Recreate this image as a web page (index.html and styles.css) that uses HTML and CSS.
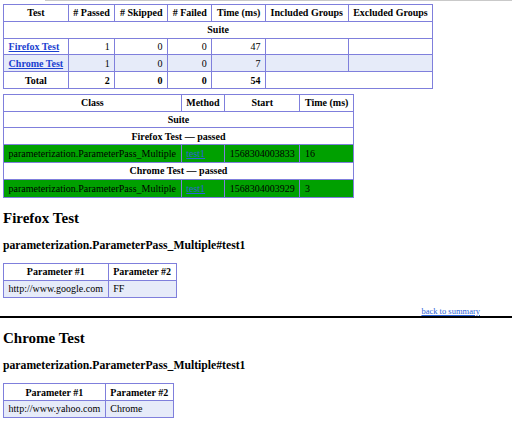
FILE: index.html
```html
<!DOCTYPE html>
<html>
<head>
<meta charset="utf-8">
<link rel="stylesheet" href="styles.css">
</head>
<body>
<div class="topline"></div>
<div class="report">
<table class="summary">
  <tr><th>Test</th><th># Passed</th><th># Skipped</th><th># Failed</th><th>Time (ms)</th><th>Included Groups</th><th>Excluded Groups</th></tr>
  <tr><th colspan="7">Suite</th></tr>
  <tr><td><a href="#t0">Firefox Test</a></td><td class="num">1</td><td class="num">0</td><td class="num">0</td><td class="num">47</td><td></td><td></td></tr>
  <tr class="stripe"><td><a href="#t1">Chrome Test</a></td><td class="num">1</td><td class="num">0</td><td class="num">0</td><td class="num">7</td><td></td><td></td></tr>
  <tr><th>Total</th><th class="num">2</th><th class="num">0</th><th class="num">0</th><th class="num">54</th><th colspan="2"></th></tr>
</table>
<table class="methods">
  <tr><th>Class</th><th>Method</th><th>Start</th><th>Time (ms)</th></tr>
  <tr><th colspan="4">Suite</th></tr>
  <tr><th colspan="4">Firefox Test &mdash; passed</th></tr>
  <tr class="passed"><td>parameterization.ParameterPass_Multiple</td><td><a class="mlink" href="#m0">test1</a></td><td>1568304003833</td><td>16</td></tr>
  <tr><th colspan="4">Chrome Test &mdash; passed</th></tr>
  <tr class="passed"><td>parameterization.ParameterPass_Multiple</td><td><a class="mlink" href="#m1">test1</a></td><td>1568304003929</td><td>3</td></tr>
</table>
<h2>Firefox Test</h2>
<h3>parameterization.ParameterPass_Multiple#test1</h3>
<table class="params">
  <tr><th>Parameter #1</th><th>Parameter #2</th></tr>
  <tr class="stripe"><td>http://www.google.com</td><td>FF</td></tr>
</table>
<p class="totop"><a href="#summary">back to summary</a></p>
<h2>Chrome Test</h2>
<h3>parameterization.ParameterPass_Multiple#test1</h3>
<table class="params">
  <tr><th>Parameter #1</th><th>Parameter #2</th></tr>
  <tr class="stripe"><td>http://www.yahoo.com</td><td>Chrome</td></tr>
</table>
<div class="nextstrip"></div>
</div>
</body>
</html>
```
FILE: styles.css
```css
html, body {
  margin: 0;
  padding: 0;
  background: #fff;
}
body {
  font-family: "Liberation Serif", "Times New Roman", serif;
  font-size: 10px;
  color: #000;
  overflow: hidden;
}
.topline {
  height: 1px;
  margin-left: 45px;
  background: #c9c9c9;
}
.report {
  padding-top: 3px;
}
.report > table,
.report > h2,
.report > h3 {
  margin-left: 3px;
}
table {
  border-collapse: collapse;
  empty-cells: show;
  margin-bottom: 5px;
}
th, td {
  border: 1px solid #7f7fdc;
  padding: 2.4px 4.6px;
  line-height: 11px;
}
th {
  vertical-align: bottom;
  font-weight: bold;
}
td {
  vertical-align: top;
}
.summary td a {
  font-weight: bold;
  color: #1a3fd0;
}
.num {
  text-align: right;
}
.stripe td {
  background: #e6ebf9;
}
.passed td {
  background: #00a000;
  padding-top: 2.9px;
  padding-bottom: 2.9px;
}
.mlink {
  color: #2b63d8;
}
h2 {
  font-size: 15px;
  margin: 12px 0;
}
h3 {
  font-size: 11.7px;
  margin: 11.5px 0;
}
.params {
  margin-bottom: 6px;
}
.totop {
  font-size: 8.5px;
  line-height: 10px;
  margin: 8px 0 10px;
  text-align: right;
  padding-right: 32px;
  border-bottom: 2px solid #000;
}
.totop a {
  color: #2b63d8;
}
.nextstrip {
  height: 6px;
  margin-top: 4px;
  background: #e6ebf9;
}
```
